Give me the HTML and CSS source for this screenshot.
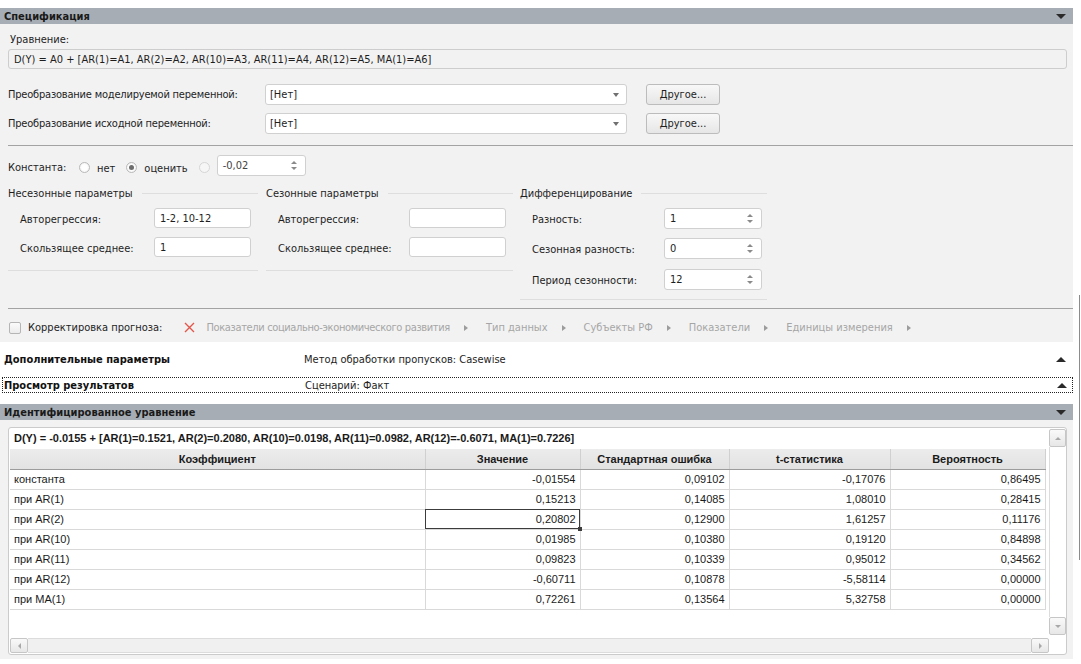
FILE: index.html
```html
<!DOCTYPE html>
<html lang="ru">
<head>
<meta charset="utf-8">
<title>Спецификация</title>
<link rel="stylesheet" href="styles.css">
</head>
<body>
<div class="page">
  <div class="bar"><span>Спецификация</span><span class="tri-down"></span></div>
  <div class="spec">
    <div class="eq-label">Уравнение:</div>
    <div class="eq-field">D(Y) = A0 + [AR(1)=A1, AR(2)=A2, AR(10)=A3, AR(11)=A4, AR(12)=A5, MA(1)=A6]</div>

    <div class="trow trow-first">
      <div class="tlabel">Преобразование моделируемой переменной:</div>
      <div class="combo"><span>[Нет]</span><span class="caret"></span></div>
      <div class="btn">Другое...</div>
    </div>
    <div class="trow trow-second">
      <div class="tlabel">Преобразование исходной переменной:</div>
      <div class="combo"><span>[Нет]</span><span class="caret"></span></div>
      <div class="btn">Другое...</div>
    </div>

    <div class="hr hr1"></div>

    <div class="const-row">
      <span class="const-label">Константа:</span>
      <span class="radio"></span><span class="rtext">нет</span>
      <span class="radio checked"></span><span class="rtext">оценить</span>
      <span class="radio disabled"></span>
      <div class="field spin spin-const"><span class="dim">-0,02</span><span class="arrows"><i class="au"></i><i class="ad"></i></span></div>
    </div>

    <div class="groups">
      <div class="group g1">
        <div class="gtitle"><span>Несезонные параметры</span><span class="gline"></span></div>
        <div class="grow r1"><span class="glabel">Авторегрессия:</span><div class="field input">1-2, 10-12</div></div>
        <div class="grow r2"><span class="glabel">Скользящее среднее:</span><div class="field input">1</div></div>
        <div class="gbottom"></div>
      </div>
      <div class="group g2">
        <div class="gtitle"><span>Сезонные параметры</span><span class="gline"></span></div>
        <div class="grow r1"><span class="glabel">Авторегрессия:</span><div class="field input"></div></div>
        <div class="grow r2"><span class="glabel">Скользящее среднее:</span><div class="field input"></div></div>
        <div class="gbottom"></div>
      </div>
      <div class="group g3">
        <div class="gtitle"><span>Дифференцирование</span><span class="gline"></span></div>
        <div class="grow r1"><span class="glabel">Разность:</span><div class="field spin"><span>1</span><span class="arrows"><i class="au"></i><i class="ad"></i></span></div></div>
        <div class="grow r2"><span class="glabel">Сезонная разность:</span><div class="field spin"><span>0</span><span class="arrows"><i class="au"></i><i class="ad"></i></span></div></div>
        <div class="grow r3"><span class="glabel">Период сезонности:</span><div class="field spin"><span>12</span><span class="arrows"><i class="au"></i><i class="ad"></i></span></div></div>
        <div class="gbottom"></div>
      </div>
    </div>

    <div class="hr hr2"></div>

    <div class="corr-row">
      <span class="checkbox"></span>
      <span class="corr-label">Корректировка прогноза:</span>
      <svg class="xicon" width="11" height="11" viewBox="0 0 11 11"><path d="M1 1 L10 10 M10 1 L1 10" stroke="#e2574c" stroke-width="1.4" fill="none"/></svg>
      <span class="crumb crumb-long">Показатели социально-экономического развития</span><span class="carr"></span>
      <span class="crumb">Тип данных</span><span class="carr"></span>
      <span class="crumb">Субъекты РФ</span><span class="carr"></span>
      <span class="crumb">Показатели</span><span class="carr"></span>
      <span class="crumb">Единицы измерения</span><span class="carr"></span>
    </div>
  </div>

  <div class="subrow sub1">
    <span class="sub-title">Дополнительные параметры</span>
    <span class="sub-info">Метод обработки пропусков: Casewise</span>
    <span class="tri-up"></span>
  </div>
  <div class="subrow sub2">
    <span class="sub-title">Просмотр результатов</span>
    <span class="sub-info">Сценарий: Факт</span>
    <span class="tri-up"></span>
  </div>

  <div class="bar bar2"><span>Идентифицированное уравнение</span><span class="tri-down"></span></div>
  <div class="res">
    <div class="grid">
      <div class="grid-main">
        <div class="grid-eq">D(Y) = -0.0155 + [AR(1)=0.1521, AR(2)=0.2080, AR(10)=0.0198, AR(11)=0.0982, AR(12)=-0.6071, MA(1)=0.7226]</div>
        <table class="coef">
          <colgroup>
            <col class="c1"><col class="c2"><col class="c3"><col class="c4"><col class="c5">
          </colgroup>
          <thead>
            <tr><th>Коэффициент</th><th>Значение</th><th>Стандартная ошибка</th><th>t-статистика</th><th>Вероятность</th></tr>
          </thead>
          <tbody>
            <tr><td>константа</td><td class="n">-0,01554</td><td class="n">0,09102</td><td class="n">-0,17076</td><td class="n">0,86495</td></tr>
            <tr><td>при AR(1)</td><td class="n">0,15213</td><td class="n">0,14085</td><td class="n">1,08010</td><td class="n">0,28415</td></tr>
            <tr><td>при AR(2)</td><td class="n sel">0,20802</td><td class="n">0,12900</td><td class="n">1,61257</td><td class="n">0,11176</td></tr>
            <tr><td>при AR(10)</td><td class="n">0,01985</td><td class="n">0,10380</td><td class="n">0,19120</td><td class="n">0,84898</td></tr>
            <tr><td>при AR(11)</td><td class="n">0,09823</td><td class="n">0,10339</td><td class="n">0,95012</td><td class="n">0,34562</td></tr>
            <tr><td>при AR(12)</td><td class="n">-0,60711</td><td class="n">0,10878</td><td class="n">-5,58114</td><td class="n">0,00000</td></tr>
            <tr><td>при MA(1)</td><td class="n">0,72261</td><td class="n">0,13564</td><td class="n">5,32758</td><td class="n">0,00000</td></tr>
          </tbody>
        </table>
        <div class="grid-spacer"></div>
        <div class="hscroll">
          <div class="sbtn sbtn-h"><i class="al"></i></div>
          <div class="htrack"></div>
          <div class="sbtn sbtn-h"><i class="ar"></i></div>
        </div>
      </div>
      <div class="vscroll">
        <div class="sbtn sbtn-v up"><i class="su"></i></div>
        <div class="vtrack"></div>
        <div class="sbtn sbtn-v down"><i class="sd"></i></div>
        <div class="corner"></div>
      </div>
    </div>
  </div>
</div>
<div class="outer-edge"></div>
</body>
</html>
```

FILE: styles.css
```css
* { box-sizing: border-box; }
html, body { margin: 0; padding: 0; background: #fff; }
body {
  font-family: "DejaVu Sans Condensed", "DejaVu Sans", sans-serif;
  font-stretch: condensed;
  font-size: 11px;
  color: #1e1e1e;
  width: 1081px;
  height: 664px;
  overflow: hidden;
  position: relative;
}
.page { width: 1073px; padding-top: 8px; }

/* section bars */
.bar {
  height: 16px;
  background: #a6adb4;
  display: flex;
  align-items: center;
  justify-content: space-between;
  padding: 0 7px 0 4px;
  font-weight: bold;
  font-size: 11px;
  color: #1a1a1a;
}
.tri-down {
  width: 0; height: 0;
  border-left: 5px solid transparent;
  border-right: 5px solid transparent;
  border-top: 5px solid #2a2a2a;
}
.tri-up {
  width: 0; height: 0;
  border-left: 5px solid transparent;
  border-right: 5px solid transparent;
  border-bottom: 5px solid #2a2a2a;
}

/* specification panel */
.spec {
  background: #f2f2f2;
  height: 318px;
  padding: 7px 0 0 8px;
}
.eq-label { height: 16px; line-height: 17px; margin-left: 2px; }
.eq-field {
  margin-top: 2px;
  margin-right: 6px;
  height: 20px;
  line-height: 19px;
  border: 1px solid #cdcdcd;
  border-radius: 3px;
  padding-left: 5px;
  background: #f2f2f2;
}

.trow { display: flex; align-items: center; height: 21px; }
.trow-first { margin-top: 15px; }
.trow-second { margin-top: 8px; }
.tlabel { width: 257px; letter-spacing: -0.2px; }
.combo {
  width: 362px; height: 21px;
  background: #fff;
  border: 1px solid #d0d0d0;
  border-radius: 3px;
  display: flex; align-items: center; justify-content: space-between;
  padding: 0 7px 0 4px;
}
.caret {
  width: 0; height: 0;
  border-left: 3.5px solid transparent;
  border-right: 3.5px solid transparent;
  border-top: 4px solid #707070;
}
.btn {
  margin-left: 19px;
  width: 74px; height: 21px;
  border: 1px solid #bcbcbc;
  border-radius: 3px;
  background: linear-gradient(#f8f8f8, #e6e6e6);
  display: flex; align-items: center; justify-content: center;
}

.hr { height: 1px; background: #a3a3a3; }
.hr1 { margin-top: 11px; }
.hr2 { margin-top: 8px; }

.const-row { display: flex; align-items: center; height: 21px; margin-top: 9px; }
.const-label { width: 71px; position: relative; top: 2px; }
.radio {
  width: 11px; height: 11px;
  border: 1px solid #b9b9b9;
  border-radius: 50%;
  background: radial-gradient(circle, #fff 40%, #ececec 100%);
  margin-right: 7px;
  position: relative;
  top: 2px;
}
.radio.checked::after {
  content: "";
  position: absolute;
  left: 2px; top: 2px;
  width: 5px; height: 5px;
  border-radius: 50%;
  background: #6d6d6d;
}
.radio.disabled { border-color: #d6d6d6; background: #f6f6f6; margin-right: 7px; }
.rtext { margin-right: 11px; position: relative; top: 3px; }

.field {
  background: #fff;
  border: 1px solid #d0d0d0;
  border-radius: 3px;
  height: 20px;
  display: flex; align-items: center;
  padding-left: 5px;
}
.spin { justify-content: space-between; padding-right: 8px; }
.spin-const { width: 89px; height: 21px; }
.dim { color: #444; }
.arrows { display: flex; flex-direction: column; gap: 3px; }
.au, .ad { display: block; width: 0; height: 0; border-left: 3px solid transparent; border-right: 3px solid transparent; }
.au { border-bottom: 3px solid #8a8a8a; }
.ad { border-top: 3px solid #8a8a8a; }

/* groups */
.groups { display: flex; align-items: flex-start; margin-top: 10px; }
.group { display: flex; flex-direction: column; }
.g1 { width: 250px; margin-right: 8px; }
.g2 { width: 247px; margin-right: 7px; }
.g3 { width: 247px; }
.gtitle { display: flex; align-items: center; height: 14px; padding-top: 1px; }
.gline { flex: 1; height: 1px; background: #dedede; margin-left: 9px; }
.grow { display: flex; align-items: center; height: 20px; padding-left: 12px; }
.glabel { flex: 1; position: relative; top: 1px; }
.grow .field { width: 97px; }
.g1 .grow .field, .g2 .grow .field { margin-right: 7px; }
.g3 .grow { height: 21px; }
.g3 .grow .field { width: 98px; height: 21px; margin-right: 5px; }
.grow.r1 { margin-top: 8px; }
.g1 .r2, .g2 .r2 { margin-top: 9px; }
.g3 .r2 { margin-top: 9px; }
.g3 .r3 { margin-top: 10px; }
.gbottom { height: 1px; background: #dedede; }
.g1 .gbottom, .g2 .gbottom { margin-top: 13px; }
.g3 .gbottom { margin-top: 9px; }

/* correction row */
.corr-row { display: flex; align-items: center; height: 24px; margin-top: 6px; padding-top: 1px; }
.checkbox {
  width: 12px; height: 12px;
  margin-left: 1px;
  border: 1px solid #b5b5b5;
  border-radius: 2px;
  background: linear-gradient(#fbfbfb, #ececec);
}
.corr-label { margin-left: 7px; }
.xicon { margin-left: 22px; margin-right: 11px; }
.crumb { color: #a6a6a6; }
.crumb-long { letter-spacing: -0.36px; }
.carr {
  width: 0; height: 0;
  border-top: 3px solid transparent;
  border-bottom: 3px solid transparent;
  border-left: 4px solid #9c9c9c;
  margin: 0 18px 0 14px;
}

/* collapsed sub sections */
.subrow {
  display: flex; align-items: center;
  height: 16px;
  padding-right: 7px;
}
.sub1 { margin-top: 9px; padding-left: 4px; padding-top: 1px; }
.sub2 {
  margin-top: 10px;
  margin-left: 2px;
  padding-left: 1px;
  padding-right: 5px;
  padding-top: 1px;
  border: 1px dotted #222;
}
.sub-title {
  font-weight: bold;
  color: #111;
}
.sub1 .sub-title { width: 300px; }
.sub2 .sub-title { width: 301px; }
.sub-info { flex: 1; }
.bar2 { margin-top: 11px; }

/* results */
.res {
  background: #f2f2f2;
  height: 239px;
  padding: 7px 6px 0 8px;
}
.grid {
  height: 228px;
  background: #fff;
  border: 1px solid #cbcbcb;
  border-radius: 3px;
  display: flex;
}
.grid-main {
  width: 1040px;
  display: flex; flex-direction: column;
  padding-left: 1px;
  font-family: "Liberation Sans", Arial, sans-serif;
  font-stretch: normal;
  font-size: 11px;
  color: #1a1a1a;
}
.grid-eq {
  height: 21px;
  line-height: 21px;
  padding-left: 4px;
  font-weight: bold;
  white-space: nowrap;
}
.coef {
  width: 1035px;
  border-collapse: collapse;
  table-layout: fixed;
}
.c1 { width: 415px; }
.c2 { width: 155px; }
.c3 { width: 149px; }
.c4 { width: 161px; }
.c5 { width: 155px; }
.coef th {
  height: 20px;
  padding: 0;
  background: linear-gradient(#ececec, #e2e2e2);
  border-right: 1px solid #d0d0d0;
  border-bottom: 1px solid #9c9c9c;
  font-weight: bold;
  text-align: center;
}
.coef td {
  height: 20px;
  padding: 0 4px;
  border-right: 1px solid #d9d9d9;
  border-bottom: 1px solid #d9d9d9;
  white-space: nowrap;
}
.coef td.n { text-align: right; }
.coef td.sel {
  outline: 1px solid #3c3c3c;
  outline-offset: -1px;
  position: relative;
}
.coef td.sel::after {
  content: "";
  position: absolute;
  right: -2px; bottom: -2px;
  width: 4px; height: 4px;
  background: #3c3c3c;
}
.grid-spacer { flex: 1; }
.hscroll {
  height: 15px;
  margin-bottom: 1px;
  display: flex;
}
.htrack {
  flex: 1;
  background: #f0f0f0;
  border-top: 1px solid #dcdcdc;
  border-bottom: 1px solid #dcdcdc;
}
.sbtn {
  background: linear-gradient(#f9f9f9, #e7e7e7);
  border: 1px solid #c6c6c6;
  border-radius: 2px;
  display: flex; align-items: center; justify-content: center;
}
.sbtn-h { width: 18px; height: 15px; }
.sbtn i { display: block; width: 0; height: 0; }
.al { border-top: 3px solid transparent; border-bottom: 3px solid transparent; border-right: 3px solid #a8a8a8; }
.ar { border-top: 3px solid transparent; border-bottom: 3px solid transparent; border-left: 3px solid #a8a8a8; }
.su { border-left: 3px solid transparent; border-right: 3px solid transparent; border-bottom: 3px solid #a8a8a8; }
.sd { border-left: 3px solid transparent; border-right: 3px solid transparent; border-top: 3px solid #a8a8a8; }

.vscroll {
  flex: 1;
  display: flex; flex-direction: column;
  padding-top: 1px;
}
.sbtn-v { height: 18px; }
.vtrack { flex: 1; border-left: 1px solid #dcdcdc; }
.corner { height: 19px; }

.outer-edge {
  position: absolute;
  left: 1079px; top: 295px;
  width: 1px; height: 265px;
  background: #8c8c8c;
}
```
